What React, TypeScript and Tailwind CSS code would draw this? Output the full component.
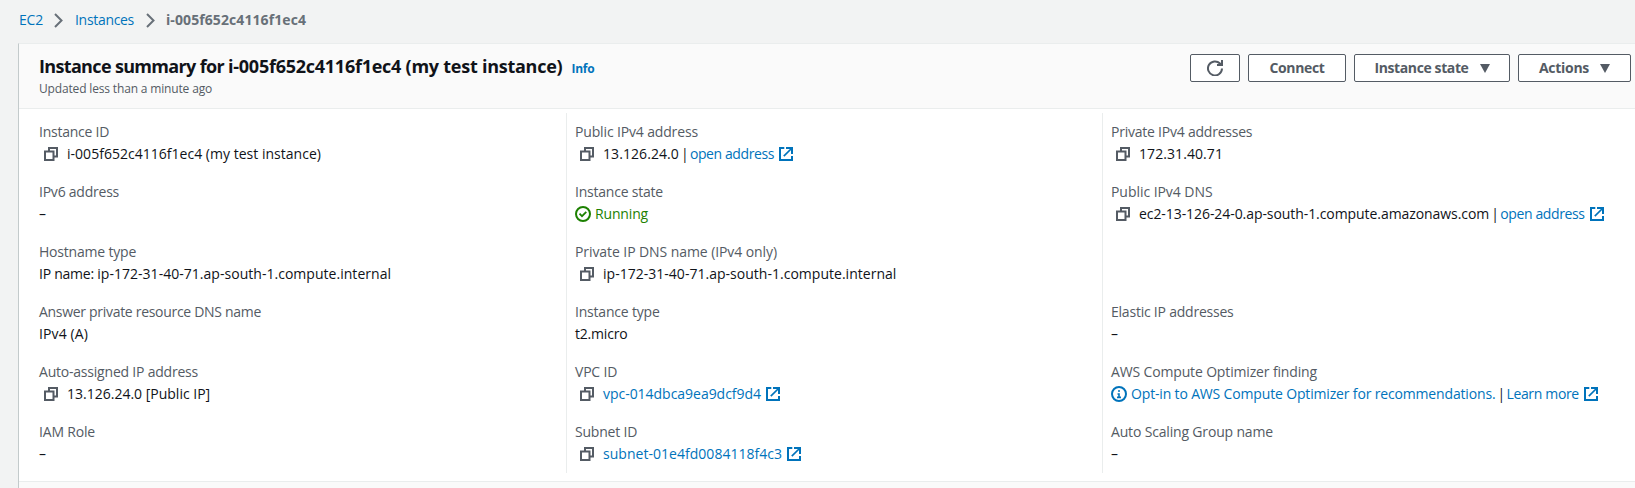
import React from "react";

type SvgProps = { className?: string };

const CopyIcon = () => (
  <svg className="ml-[5px] mr-[9px] size-[14px] shrink-0 text-[#545b64]" viewBox="0 0 14 14" fill="none" stroke="currentColor" strokeWidth="2">
    <path d="M1 4.5H9.5V13H1Z" />
    <path d="M5 4.5V1H13V9.5H9.5" />
  </svg>
);

const ExternalIcon = () => (
  <svg className="ml-[5px] size-[14px] shrink-0 text-[#0073bb]" viewBox="0 0 14 14" fill="none" stroke="currentColor" strokeWidth="2">
    <path d="M5.3 1H1V13H13V9" />
    <path d="M7 1H13V7" />
    <path d="M13 1L4.8 9.2" strokeWidth="1.7" />
  </svg>
);

const CheckIcon = () => (
  <svg className="mr-[4px] size-[16px] shrink-0" viewBox="0 0 16 16" fill="none" stroke="currentColor" strokeWidth="2">
    <circle cx="8" cy="8" r="7" />
    <path d="M4.5 7.7L7 10.2L11.3 5.9" strokeWidth="1.8" />
  </svg>
);

const InfoIcon = () => (
  <svg className="mr-[4px] size-[16px] shrink-0 text-[#0073bb]" viewBox="0 0 16 16" fill="none" stroke="currentColor" strokeWidth="2">
    <circle cx="8" cy="8" r="7" />
    <path d="M7 5H9M6.5 8H8V11M6 11.4H10" strokeWidth="1.6" />
  </svg>
);

const RefreshIcon = () => (
  <svg className="size-[16px]" viewBox="0 0 16 16" fill="none" stroke="currentColor" strokeWidth="2">
    <path d="M15 8.5A7 7 0 1 1 13 3.5L14.2 4.8" />
    <path d="M10 5H15V0" />
  </svg>
);

const Caret = () => (
  <svg className="h-[9px] w-[10px]" viewBox="0 0 10 9" fill="currentColor">
    <path d="M0 0H10L5 9Z" />
  </svg>
);

const Chevron = ({ className }: SvgProps) => (
  <svg className={"h-[15px] w-[9px] shrink-0 text-[#687078] " + className} viewBox="0 0 9 15" fill="none" stroke="currentColor" strokeWidth="2">
    <path d="M1 1L7.5 7.5L1 14" />
  </svg>
);

const Link = ({ children, className = "" }: { children: string; className?: string }) => (
  <a className={"text-[#0073bb] " + className}>{children}</a>
);

const Bar = () => <span className="mr-[5px] ml-[2px] w-[4px]">|</span>;

function Field({ label, tracking, children }: { label: string; tracking: string; children: React.ReactNode }) {
  return (
    <div className="h-[60px]">
      <div className={"h-[22px] text-[#545b64] " + tracking}>{label}</div>
      <div className="flex h-[22px] items-center">{children}</div>
    </div>
  );
}

const button = "flex h-[28px] items-center justify-center rounded-[2px] border border-[#545b64] bg-white font-bold text-[#545b64]";

export default function App() {
  return (
    <div className="h-[488px] overflow-hidden bg-[#f2f3f3] font-['Open_Sans',sans-serif] text-[14px] leading-[22px] whitespace-nowrap text-[#101319]">
      <nav className="flex h-[43px] items-center pb-[3px] pl-[19px]">
        <Link className="w-[24px] tracking-[-0.2px]">EC2</Link>
        <Chevron className="mr-[12px] ml-[11px]" />
        <Link className="w-[59px] tracking-[-0.31px]">Instances</Link>
        <Chevron className="mr-[11px] ml-[12px]" />
        <span className="font-bold tracking-[0.09px] text-[#687078]">i-005f652c4116f1ec4</span>
      </nav>

      <main className="ml-[18px] h-[445px] border-t border-l border-t-[#eaeded] border-l-[#c3cacb] bg-white">
        <header className="flex h-[65px] justify-between border-b border-[#eaeded] bg-[#fafafa] pr-[4px] pl-[20px]">
          <div className="pt-[11px]">
            <div className="flex h-[23px] items-baseline">
              <h1 className="text-[18px] font-bold tracking-[-0.25px]">
                <span className="tracking-[-0.66px]">Instance summary for </span>i-005f652c4116f1ec4 (my test instance)
              </h1>
              <Link className="ml-[9px] text-[12px] font-bold tracking-[-0.23px]">Info</Link>
            </div>
            <div className="text-[12px] tracking-[-0.16px] text-[#545b64]">Updated less than a minute ago</div>
          </div>
          <div className="flex gap-2 pt-[10px]">
            <button className={button + " w-[50px]"}><RefreshIcon /></button>
            <button className={button + " w-[98px] tracking-[-0.36px]"}>Connect</button>
            <button className={button + " w-[156px] gap-[11px] tracking-[-0.39px]"}>Instance state<Caret /></button>
            <button className={button + " w-[113px] gap-[11px] tracking-[-0.29px]"}>Actions<Caret /></button>
          </div>
        </header>

        <div className="mt-[4px] flex h-[360px]">
          <section className="w-[547px] pt-[8px] pl-[20px]">
            <Field label="Instance ID" tracking="tracking-[-0.25px]">
              <CopyIcon /><span className="tracking-[0.02px]">i-005f652c4116f1ec4 (my test instance)</span>
            </Field>
            <Field label="IPv6 address" tracking="tracking-[-0.23px]">–</Field>
            <Field label="Hostname type" tracking="tracking-[-0.2px]">
              <span className="whitespace-pre tracking-[0.03px]"><span className="tracking-[-0.25px]">IP name: </span>ip-172-31-40-71.ap-south-1.compute.internal</span>
            </Field>
            <Field label="Answer private resource DNS name" tracking="tracking-[-0.3px]">
              <span className="tracking-[0.12px]">IPv4 (A)</span>
            </Field>
            <Field label="Auto-assigned IP address" tracking="tracking-[-0.21px]">
              <CopyIcon /><span>13.126.24.0 [Public IP]</span>
            </Field>
            <Field label="IAM Role" tracking="tracking-[-0.18px]">–</Field>
          </section>

          <section className="w-[536px] border-l border-[#eaeded] pt-[8px] pl-[8px]">
            <Field label="Public IPv4 address" tracking="tracking-[-0.15px]">
              <CopyIcon /><span className="tracking-[0.08px]">13.126.24.0</span><Bar />
              <Link className="tracking-[-0.41px]">open address</Link><ExternalIcon />
            </Field>
            <Field label="Instance state" tracking="tracking-[-0.22px]">
              <span className="flex items-center tracking-[-0.16px] text-[#1d8102]"><CheckIcon />Running</span>
            </Field>
            <Field label="Private IP DNS name (IPv4 only)" tracking="tracking-[-0.08px]">
              <CopyIcon /><span className="tracking-[0.02px]">ip-172-31-40-71.ap-south-1.compute.internal</span>
            </Field>
            <Field label="Instance type" tracking="tracking-[-0.2px]">
              <span className="tracking-[-0.2px]">t2.micro</span>
            </Field>
            <Field label="VPC ID" tracking="tracking-[-0.2px]">
              <CopyIcon /><Link className="tracking-[-0.03px]">vpc-014dbca9ea9dcf9d4</Link><ExternalIcon />
            </Field>
            <Field label="Subnet ID" tracking="tracking-[-0.2px]">
              <CopyIcon /><Link className="tracking-[0.03px]">subnet-01e4fd0084118f4c3</Link><ExternalIcon />
            </Field>
          </section>

          <section className="flex-1 border-l border-[#eaeded] pt-[8px] pl-[8px]">
            <Field label="Private IPv4 addresses" tracking="tracking-[-0.23px]">
              <CopyIcon /><span className="tracking-[0.08px]">172.31.40.71</span>
            </Field>
            <Field label="Public IPv4 DNS" tracking="tracking-[-0.05px]">
              <CopyIcon /><span className="tracking-[-0.07px]">ec2-13-126-24-0.ap-south-1.compute.amazonaws.com</span><Bar />
              <Link className="tracking-[-0.37px]">open address</Link><ExternalIcon />
            </Field>
            <div className="h-[60px]" />
            <Field label="Elastic IP addresses" tracking="tracking-[-0.22px]">–</Field>
            <Field label="AWS Compute Optimizer finding" tracking="tracking-[-0.15px]">
              <InfoIcon /><Link className="tracking-[-0.16px]">Opt-in to AWS Compute Optimizer for recommendations.</Link><Bar />
              <Link className="tracking-[-0.34px]">Learn more</Link><ExternalIcon />
            </Field>
            <Field label="Auto Scaling Group name" tracking="tracking-[-0.17px]">–</Field>
          </section>
        </div>
        <footer className="mt-[8px] h-[8px] border-t border-[#eaeded] bg-[#fafafa]" />
      </main>
    </div>
  );
}
